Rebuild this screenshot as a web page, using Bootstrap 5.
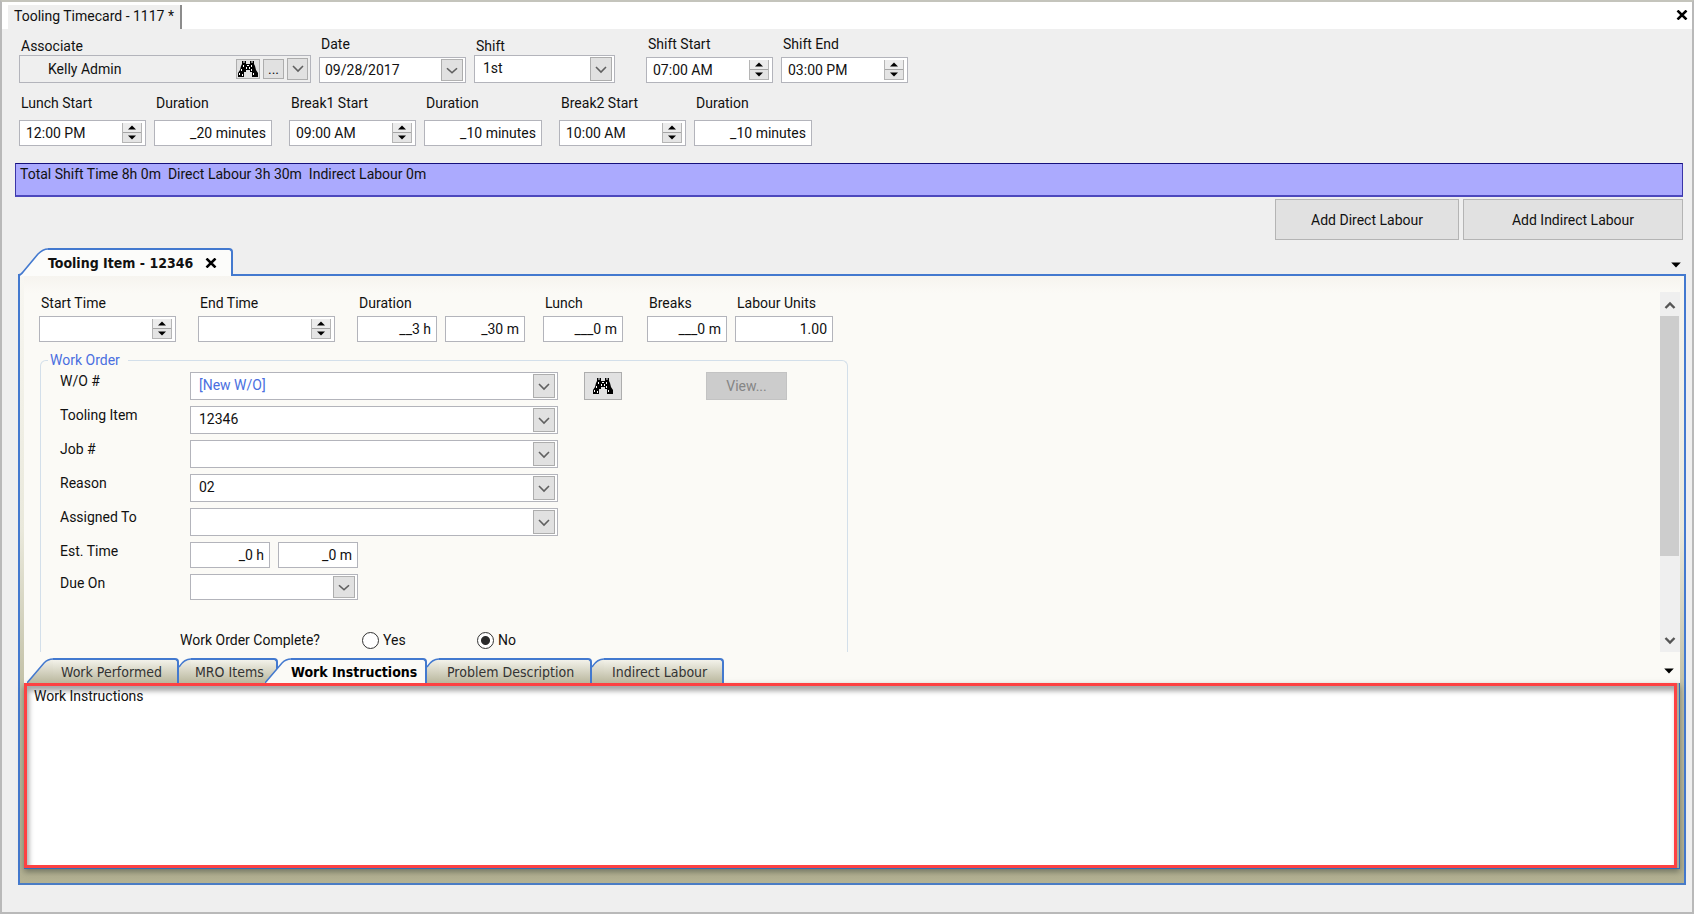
<!DOCTYPE html>
<html lang="en">
<head>
<meta charset="utf-8">
<meta name="viewport" content="width=device-width, initial-scale=1">
<title>Tooling Timecard</title>
<link href="https://cdn.jsdelivr.net/npm/bootstrap@5.3.0/dist/css/bootstrap.min.css" rel="stylesheet">
<style>
  :root { --line:#b3b4bb; --blue:#4379cf; --face:#efefef; --cream:#fbfaf6; }
  body { font-family:Roboto,"Liberation Sans",sans-serif; font-size:14px; line-height:18px; color:#111; background:var(--face); }
  button, input, select, textarea { font:inherit; color:inherit; }
  button { padding:0; border:0; background:none; }
  label, .caption { display:block; line-height:18px; white-space:nowrap; }
  .over { padding-left:2px; }
  .window { min-height:100vh; border:2px solid #b9b9b9; border-top-color:#c4c4bc; padding-bottom:27px; }
  .titlebar { height:27px; background:#fff; padding:3px 4px 0 6px; }
  .doc-tab { height:24px; padding:0 6px; background:var(--face); border-right:2px solid #8c8c8c; }
  .doc-tab, .close-doc { line-height:22px; }
  .row-one { padding:6px 0 0 17px; }
  .row-two { padding:7px 0 0 17px; }

  .box { background:#fff; border:1px solid var(--line); border-radius:0; height:26px; padding:0 6px; outline-offset:-1px; }
  .num { text-align:right; padding:0 5px; }
  select.box { appearance:none; height:28px; padding:0 28px 2px 8px;
    background:#fff url("data:image/svg+xml,%3Csvg xmlns='http://www.w3.org/2000/svg' width='22' height='24'%3E%3Crect x='.5' y='.5' width='21' height='23' fill='%23e1e1e1' stroke='%23adadad'/%3E%3Cpath d='M6 10l5 5 5-5' fill='none' stroke='%23606060' stroke-width='1.6'/%3E%3C/svg%3E") no-repeat right 2px center; }
  select.date { height:26px; padding:0 28px 0 5px; background-size:22px 22px; }
  select.new-order { color:#4a6fe0; }
  .spin { display:flex; align-items:center; padding:0 3px 0 6px; }
  .spin input { flex:1; min-width:0; width:0; border:0; padding:0; background:none; outline:0; }
  .spin span { display:flex; flex-direction:column; width:20px; height:20px; border:1px solid #b5b5b5; border-top:0; background:#ececec; }
  .spin button { flex:1; display:flex; align-items:center; justify-content:center; }
  .spin button + button { border-top:1px solid #a4a4a4; background:#e4e4e4; }
  .face { background:#e1e1e1; border:1px solid #adadad; display:flex; align-items:center; justify-content:center; }

  .w-assoc { width:292px; } .w-date { width:147px; } .w-shift { width:141px; }
  .w-time { width:127px; } .w-mins { width:118px; } .w-spin { width:137px; }
  .gap-after { margin-right:17px; }
  .w-small { width:80px; } .w-units { width:98px; } .w-combo { width:368px; } .w-due { width:168px; }

  .assoc { display:flex; align-items:center; gap:3px; height:28px; padding:0 2px 0 28px; background:var(--face); }
  .assoc input { flex:1; min-width:0; border:0; background:none; padding:0; }
  .assoc .face { height:20px; }
  .assoc .face:last-child { height:22px; width:21px; }

  .totals { margin:17px 9px 0 13px; height:34px; padding:1px 4px; background:#abaafe; border:1px solid #3a35a8; border-top:1px solid #15107a; border-bottom:2px solid #4c48bd; white-space:pre; }
  .labour { height:41px; border-color:#b4b4b4; }
  .labour.direct { width:184px; } .labour.indirect { width:220px; }

  .tab-item { font-family:"DejaVu Sans Condensed","DejaVu Sans",sans-serif; font-stretch:condensed; display:flex; align-items:stretch; position:relative; white-space:nowrap; }
  .tab-item svg { flex:none; display:block; }
  .tab-face { border-top:2px solid var(--blue); border-right:2px solid var(--blue); border-radius:0 4px 0 0; display:flex; align-items:center; }
  .outer-tabs { margin:8px 11px 0 16px; height:26px; }
  .outer-tabs .tab-item { height:28px; z-index:1; font-size:14px; font-weight:700; width:215px; }
  .outer-tabs .tab-face { flex:1; background:#fcfcfa; gap:12px; }
  .work-panel { margin:0 6px 0 16px; border:2px solid var(--blue); border-bottom-color:#4a7cc4; padding:0 4px 14px; background:linear-gradient(#f8f7f2 0,#e9e8db 42%,#bfbda2 70%,#b3b192 100%); }
  .client { background:linear-gradient(#f6f4ef,var(--cream) 17px); padding-top:16px; }
  .form-area { padding:2px 0 0 15px; }
  .bar { width:20px; background:#efefef; }
  .bar .thumb { width:19px; height:240px; background:#cdcdcd; }
  .bar button { height:24px; }
  .order { width:808px; margin:9px 0 0 1px; border:1px solid #d3dfea; border-bottom:0; border-radius:6px 6px 0 0; padding:3px 0 3px 19px; min-width:0; }
  .order legend { float:none; width:auto; margin:0 0 0 -12px; padding:0 8px 0 2px; font-size:14px; line-height:18px; color:#4a6fe0; }
  .order .field { display:flex; align-items:flex-start; margin-bottom:6px; }
  .order .field > label, .order .field > .caption { width:130px; }
  .complete { padding:25px 0 0 120px; }
  .complete input { appearance:none; width:17px; height:17px; margin:0; border:1px solid #333; border-radius:50%; background:#fff; }
  .complete input:checked { background:radial-gradient(#2b2b2b 0 4px,#fff 5px); }
  .inner-tabs { height:31px; padding:6px 6px 0 3px; }
  .inner-tabs .tab-item { height:25px; font-size:14px; color:#333; }
  .inner-tabs .tab-face { flex:1; background:linear-gradient(#f3f2ea,#b9b79d); }
  .inner-tabs .tab-item.active { margin-left:-13px; z-index:1; font-weight:700; color:#000; }
  .inner-tabs .tab-item.active .tab-face { background:#fbfaf6; }
  .t1 { width:152px; } .t2 { width:99px; } .t3 { width:162px; } .t4 { width:165px; } .t5 { width:132px; }
  .notes { border:solid #2f6dbb; border-width:0 1px 1px 0; padding-right:2px; box-shadow:0 3px 6px #4b5044a0; background:#a9ab9b; }
  .notes-frame { border:3px solid #fd4142; box-shadow:inset 2px 5px 5px #8c8c8cc0; background:#fff; }
  .notes textarea { display:block; width:100%; height:179px; border:0; resize:none; outline:0; background:transparent; padding:1px 7px; }
  .find-btn { width:38px; height:28px; margin-left:26px; }
  .view-btn { width:81px; height:28px; margin-left:84px; background:#cccccc; border:1px solid #c3c3c3; color:#858585; }
</style>
</head>
<body>
<svg width="0" height="0" class="position-absolute" aria-hidden="true">
  <symbol id="binoculars" viewBox="0 0 20 18">
    <path d="M4 1h4v3h4V1h4v3l1 2 1 4 2 3v4h-6v-5h-2v-2H8v2H6v5H0v-4l2-3 1-4 1-2z" fill="#000"/>
    <path d="M5 2h2M13 2h2M5.500 5v2M13.500 5v2M9 5.500h2M8.500 7v2M11.500 7v2M3.500 9v2M1.500 13v2M4.500 14v2M13.500 9v2M15.500 13v2" stroke="#fff" stroke-width="1" fill="none"/>
  </symbol>
  <symbol id="up" viewBox="0 0 8 5"><path d="M0 4.500h8L4 .5z"/></symbol>
  <symbol id="down" viewBox="0 0 8 5"><path d="M0 .5h8L4 4.500z"/></symbol>
  <symbol id="chev" viewBox="0 0 12 8"><path d="M1 1l5 5 5-5" fill="none" stroke="#606060" stroke-width="1.600"/></symbol>
  <symbol id="chev-bold" viewBox="0 0 12 8"><path d="M1.500 1l4.500 4.500L10.500 1" fill="none" stroke="#555" stroke-width="2.400"/></symbol>
  <symbol id="cross" viewBox="0 0 12 10"><path d="M1.500 0.500l9 9M10.500 0.500l-9 9" stroke="#000" stroke-width="2.500" fill="none"/></symbol>
  <symbol id="curve" viewBox="0 0 12 25"><path d="M0 25V9Q5 1 12 1V25z" fill="url(#tabfill)"/><path d="M0 9Q5 1 12 1" fill="none" stroke="#4379cf" stroke-width="1.500"/></symbol>
  <defs><linearGradient id="tabfill" x2="0" y2="1"><stop stop-color="#f3f2ea"/><stop offset="1" stop-color="#b9b79d"/></linearGradient></defs>
</svg>

<div class="window d-flex flex-column">
  <header class="titlebar d-flex justify-content-between">
    <div class="doc-tab">Tooling Timecard - 1117 *</div>
    <button class="close-doc d-flex align-items-center pb-1" aria-label="Close"><svg width="12" height="10"><use href="#cross"/></svg></button>
  </header>

  <section class="row-one d-flex align-items-end">
    <div class="w-assoc me-2 pb-1"><label for="assoc" class="over">Associate</label>
      <div class="box assoc"><input id="assoc" value="Kelly Admin">
        <button class="face" style="width:24px" aria-label="Find associate"><svg width="20" height="18"><use href="#binoculars"/></svg></button>
        <button class="face" style="width:21px" aria-label="More">...</button>
        <button class="face" aria-label="Open list"><svg width="12" height="8"><use href="#chev"/></svg></button></div></div>
    <div class="w-date me-2 pb-1"><label for="date" class="over">Date</label>
      <select id="date" class="box date w-100 d-block mt-1"><option>09/28/2017</option></select></div>
    <div class="w-shift pb-1"><label for="shift" class="over">Shift</label>
      <select id="shift" class="box w-100 d-block"><option>1st</option></select></div>
    <div class="w-time me-2 pb-1" style="margin-left:31px"><label for="ss" class="over pb-1">Shift Start</label>
      <div class="box spin"><input id="ss" value="07:00 AM"><span><button aria-label="Up"><svg width="8" height="5"><use href="#up"/></svg></button><button aria-label="Down"><svg width="8" height="5"><use href="#down"/></svg></button></span></div></div>
    <div class="w-time pb-1"><label for="se" class="over pb-1">Shift End</label>
      <div class="box spin"><input id="se" value="03:00 PM"><span><button aria-label="Up"><svg width="8" height="5"><use href="#up"/></svg></button><button aria-label="Down"><svg width="8" height="5"><use href="#down"/></svg></button></span></div></div>
  </section>

  <section class="row-two d-flex">
    <div class="w-time me-2"><label for="ls" class="over pb-2">Lunch Start</label>
      <div class="box spin"><input id="ls" value="12:00 PM"><span><button aria-label="Up"><svg width="8" height="5"><use href="#up"/></svg></button><button aria-label="Down"><svg width="8" height="5"><use href="#down"/></svg></button></span></div></div>
    <div class="w-mins gap-after"><label for="ld" class="over pb-2">Duration</label><input id="ld" class="box num w-100 d-block" value="_20 minutes"></div>
    <div class="w-time me-2"><label for="b1" class="over pb-2">Break1 Start</label>
      <div class="box spin"><input id="b1" value="09:00 AM"><span><button aria-label="Up"><svg width="8" height="5"><use href="#up"/></svg></button><button aria-label="Down"><svg width="8" height="5"><use href="#down"/></svg></button></span></div></div>
    <div class="w-mins gap-after"><label for="d1" class="over pb-2">Duration</label><input id="d1" class="box num w-100 d-block" value="_10 minutes"></div>
    <div class="w-time me-2"><label for="b2" class="over pb-2">Break2 Start</label>
      <div class="box spin"><input id="b2" value="10:00 AM"><span><button aria-label="Up"><svg width="8" height="5"><use href="#up"/></svg></button><button aria-label="Down"><svg width="8" height="5"><use href="#down"/></svg></button></span></div></div>
    <div class="w-mins"><label for="d2" class="over pb-2">Duration</label><input id="d2" class="box num w-100 d-block" value="_10 minutes"></div>
  </section>

  <div class="totals">Total Shift Time 8h 0m  Direct Labour 3h 30m  Indirect Labour 0m</div>
  <div class="d-flex justify-content-end gap-1" style="padding:2px 9px 0 0">
    <button class="face labour direct">Add Direct Labour</button>
    <button class="face labour indirect">Add Indirect Labour</button>
  </div>

  <nav class="outer-tabs d-flex justify-content-between">
    <div class="tab-item">
      <svg width="30" height="28" viewBox="0 0 30 28"><path d="M2 28L4 25 20 6Q25 1 30 1V28z" fill="#fcfcfa"/><path d="M0 27Q3 27 5 24L20 6Q25 1 30 1" fill="none" stroke="#4379cf" stroke-width="1.600"/></svg>
      <div class="tab-face"><span>Tooling Item - 12346</span><button aria-label="Close tab"><svg class="d-block" width="12" height="10"><use href="#cross"/></svg></button></div>
    </div>
    <button class="pt-2" aria-label="Tab list"><svg class="d-block" width="10" height="6"><use href="#down"/></svg></button>
  </nav>

  <main class="work-panel flex-grow-1">
    <div class="client">
      <div class="d-flex justify-content-between">
        <div class="form-area">
          <div class="d-flex">
            <div class="w-spin" style="margin-right:22px"><label for="st" class="over pb-1">Start Time</label>
              <div class="box spin"><input id="st"><span><button aria-label="Up"><svg width="8" height="5"><use href="#up"/></svg></button><button aria-label="Down"><svg width="8" height="5"><use href="#down"/></svg></button></span></div></div>
            <div class="w-spin" style="margin-right:22px"><label for="et" class="over pb-1">End Time</label>
              <div class="box spin"><input id="et"><span><button aria-label="Up"><svg width="8" height="5"><use href="#up"/></svg></button><button aria-label="Down"><svg width="8" height="5"><use href="#down"/></svg></button></span></div></div>
            <div style="margin-right:18px"><label for="dh" class="over pb-1">Duration</label>
              <div class="d-flex gap-2"><input id="dh" class="box num w-small" value="__3 h"><input class="box num w-small" aria-label="Duration minutes" value="_30 m"></div></div>
            <div class="me-4"><label for="lu" class="over pb-1">Lunch</label><input id="lu" class="box num w-small d-block" value="___0 m"></div>
            <div class="me-2"><label for="br" class="over pb-1">Breaks</label><input id="br" class="box num w-small d-block" value="___0 m"></div>
            <div><label for="un" class="over pb-1">Labour Units</label><input id="un" class="box num w-units d-block" value="1.00"></div>
          </div>
          <fieldset class="order">
            <legend>Work Order</legend>
            <div class="field"><label for="wo">W/O #</label><select id="wo" class="box w-combo new-order"><option>[New W/O]</option></select>
              <button class="face find-btn" aria-label="Find work order"><svg width="20" height="18"><use href="#binoculars"/></svg></button>
              <button class="view-btn" disabled>View...</button></div>
            <div class="field"><label for="ti">Tooling Item</label><select id="ti" class="box w-combo"><option>12346</option></select></div>
            <div class="field"><label for="jo">Job #</label><select id="jo" class="box w-combo"><option></option></select></div>
            <div class="field"><label for="re">Reason</label><select id="re" class="box w-combo"><option>02</option></select></div>
            <div class="field"><label for="as">Assigned To</label><select id="as" class="box w-combo"><option></option></select></div>
            <div class="field"><label for="eh">Est. Time</label><div class="d-flex gap-2"><input id="eh" class="box num w-small" value="_0 h"><input class="box num w-small" aria-label="Estimated minutes" value="_0 m"></div></div>
            <div class="field"><label for="du">Due On</label><select id="du" class="box date w-due"><option></option></select></div>
            <div class="complete d-flex align-items-center">
              <span class="caption" style="width:182px">Work Order Complete?</span>
              <input type="radio" name="done" id="yes"><label for="yes" class="ps-1" style="width:98px">Yes</label>
              <input type="radio" name="done" id="no" checked><label for="no" class="ps-1">No</label>
            </div>
          </fieldset>
        </div>
        <div class="bar d-flex flex-column">
          <button aria-label="Scroll up"><svg width="12" height="8" style="transform:rotate(180deg)"><use href="#chev-bold"/></svg></button>
          <div class="thumb"></div>
          <button class="mt-auto" aria-label="Scroll down"><svg width="12" height="8"><use href="#chev-bold"/></svg></button>
        </div>
      </div>
      <nav class="inner-tabs d-flex">
        <button class="tab-item t1"><svg width="26" height="25" viewBox="0 0 26 25"><path d="M0 25L17 5Q21 1 26 1V25z" fill="url(#tabfill)"/><path d="M0 25L17 5Q21 1 26 1" fill="none" stroke="#4379cf" stroke-width="1.500"/></svg><span class="tab-face ps-2">Work Performed</span></button>
        <button class="tab-item t2"><svg width="12" height="25"><use href="#curve"/></svg><span class="tab-face ps-1">MRO Items</span></button>
        <button class="tab-item t3 active"><svg width="26" height="25" viewBox="0 0 26 25"><path d="M0 25L17 5Q21 1 26 1V25z" fill="#fbfaf6"/><path d="M0 25L17 5Q21 1 26 1" fill="none" stroke="#4379cf" stroke-width="1.500"/></svg><span class="tab-face">Work Instructions</span></button>
        <button class="tab-item t4"><svg width="12" height="25"><use href="#curve"/></svg><span class="tab-face ps-2">Problem Description</span></button>
        <button class="tab-item t5"><svg width="12" height="25"><use href="#curve"/></svg><span class="tab-face ps-2">Indirect Labour</span></button>
        <button class="ms-auto" aria-label="Tab list"><svg class="d-block" width="10" height="6"><use href="#down"/></svg></button>
      </nav>
      <div class="notes"><div class="notes-frame"><textarea aria-label="Work Instructions">Work Instructions</textarea></div></div>
    </div>
  </main>
</div>
<script src="https://cdn.jsdelivr.net/npm/bootstrap@5.3.0/dist/js/bootstrap.bundle.min.js"></script>
</body>
</html>
